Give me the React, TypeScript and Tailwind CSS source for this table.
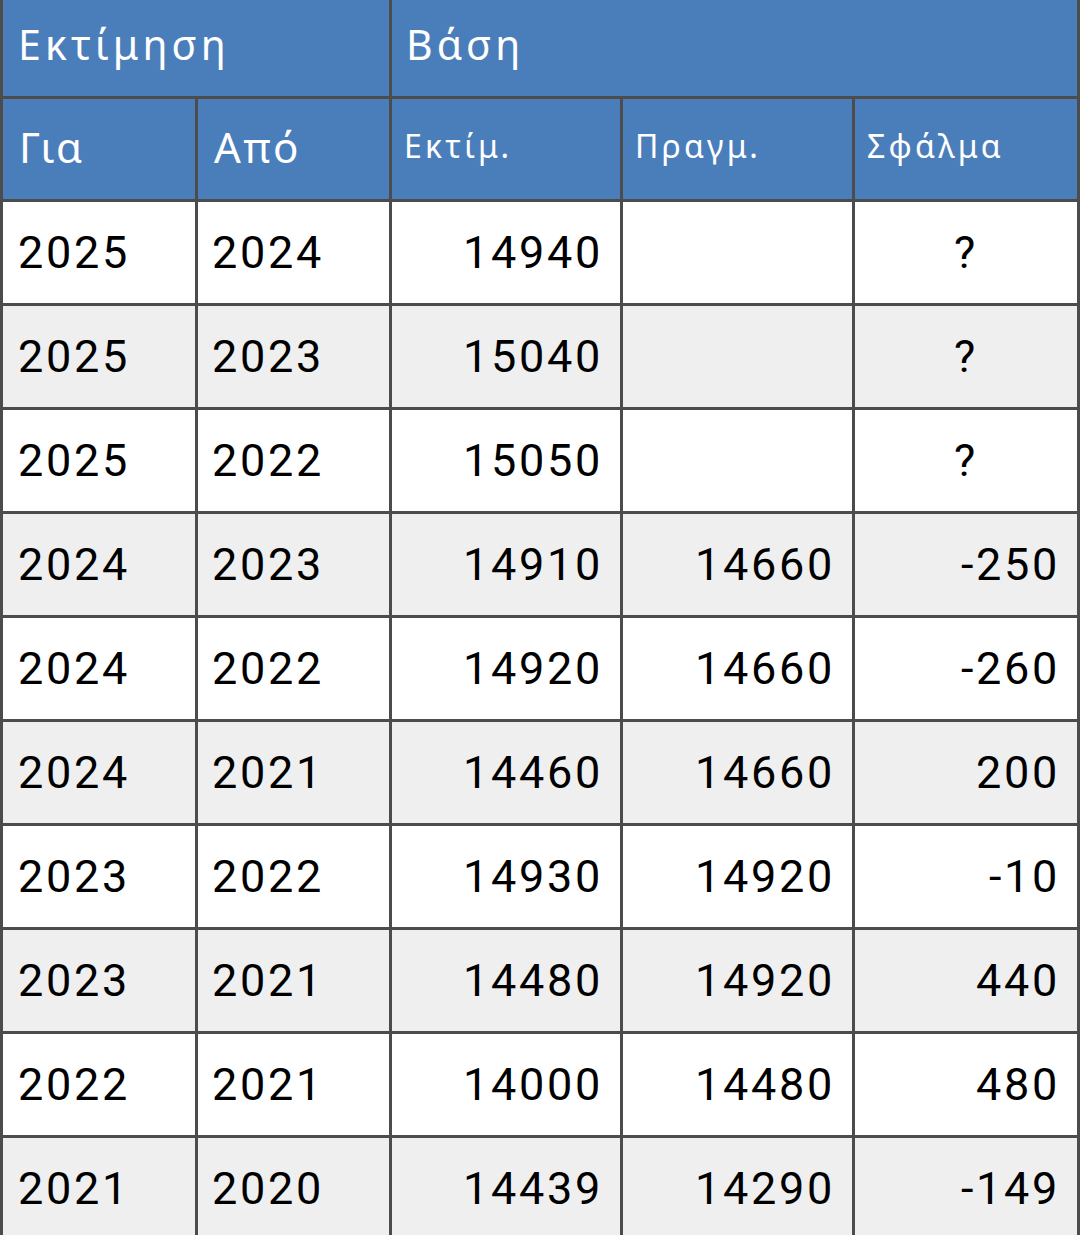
import React from "react";

const rows: [string, string, string, string, string][] = [
  ["2025", "2024", "14940", "", "?"],
  ["2025", "2023", "15040", "", "?"],
  ["2025", "2022", "15050", "", "?"],
  ["2024", "2023", "14910", "14660", "-250"],
  ["2024", "2022", "14920", "14660", "-260"],
  ["2024", "2021", "14460", "14660", "200"],
  ["2023", "2022", "14930", "14920", "-10"],
  ["2023", "2021", "14480", "14920", "440"],
  ["2022", "2021", "14000", "14480", "480"],
  ["2021", "2020", "14439", "14290", "-149"],
];

const head = "bg-[#4a7ebb] text-white flex items-center pb-[6px] font-['Noto_Sans',sans-serif]";

export default function App() {
  return (
    <div className="w-[1080px] bg-white">
      <div className="grid grid-cols-[192px_191px_228px_229px_222px] grid-rows-[96px_100px] auto-rows-[101px] gap-[3px] bg-[#4c4c4c] px-[3px] pb-[3px]">
        <div className={`${head} col-span-2 pl-[15px] text-[41px] tracking-[0.1em]`}>Εκτίμηση</div>
        <div className={`${head} col-span-3 pl-[14px] text-[41px] tracking-[0.1em]`}>Βάση</div>
        <div className={`${head} pl-[16px] text-[42px] tracking-[0.06em]`}>Για</div>
        <div className={`${head} pl-[16px] text-[42px] tracking-[0.06em]`}>Από</div>
        <div className={`${head} pl-[12px] text-[32px] tracking-[0.1em]`}>Εκτίμ.</div>
        <div className={`${head} pl-[12px] text-[32px] tracking-[0.1em]`}>Πραγμ.</div>
        <div className={`${head} pl-[12px] text-[32px] tracking-[0.1em]`}>Σφάλμα</div>
        {rows.map((r, i) => {
          const bg = i % 2 === 0 ? "bg-white" : "bg-[#efefef]";
          const cell = `${bg} flex items-center text-black text-[45px] tracking-[0.06em] font-['Roboto',sans-serif]`;
          return (
            <React.Fragment key={i}>
              <div className={`${cell} pl-[15px]`}>{r[0]}</div>
              <div className={`${cell} pl-[14px]`}>{r[1]}</div>
              <div className={`${cell} justify-end pr-[17px]`}>{r[2]}</div>
              <div className={`${cell} justify-end pr-[17px]`}>{r[3]}</div>
              {r[4] === "?" ? (
                <div className={`${cell} justify-center`}>{r[4]}</div>
              ) : (
                <div className={`${cell} justify-end pr-[17px]`}>{r[4]}</div>
              )}
            </React.Fragment>
          );
        })}
      </div>
    </div>
  );
}
